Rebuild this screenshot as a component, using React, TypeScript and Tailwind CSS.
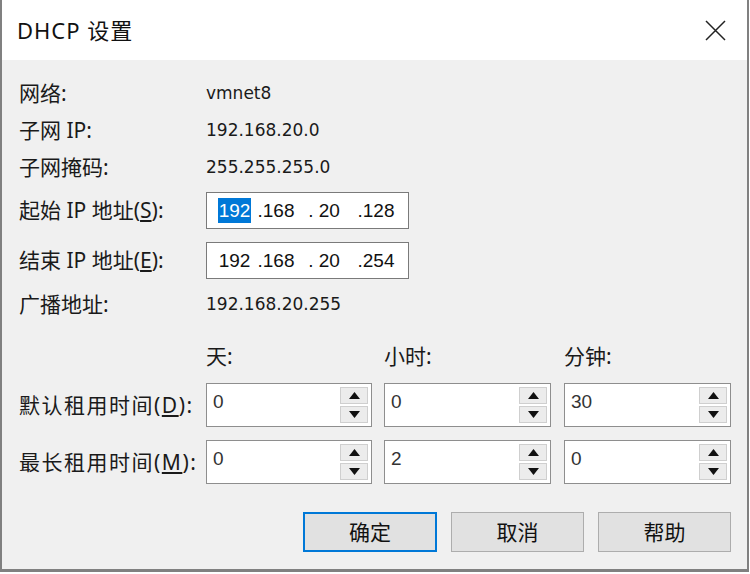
import React from "react";

const cjk = { fontFamily: '"Noto Sans", "Noto Sans CJK SC", sans-serif' };
const num = { fontFamily: '"DejaVu Sans", "Noto Sans CJK SC", sans-serif' };
const ipf = { fontFamily: '"Liberation Sans", "Noto Sans CJK SC", sans-serif' };

function Label({ children, className = "" }: { children: React.ReactNode; className?: string }) {
  return (
    <div className={"w-[187px] shrink-0 text-[21px] leading-none text-[#1a1a1a] " + className} style={cjk}>
      {children}
    </div>
  );
}

function InfoRow({ label, value }: { label: React.ReactNode; value: string }) {
  return (
    <div className="flex h-[37px] items-center">
      <Label>{label}</Label>
      <div className="text-[17px] leading-none text-[#1a1a1a]" style={num}>
        {value}
      </div>
    </div>
  );
}

function IpBox({ parts, selectFirst }: { parts: string[]; selectFirst?: boolean }) {
  return (
    <div
      className="flex h-[37px] w-[203px] items-center border border-[#7a7a7a] bg-white pl-[11px] text-[19px] leading-none text-[#111]"
      style={ipf}
    >
      <span className={"w-[33px] py-[3px] text-center " + (selectFirst ? "bg-[#0078d7] text-white" : "")}>{parts[0]}</span>
      <span className="w-[50px] text-center">.{parts[1]}</span>
      <span className="w-[46px] text-center">. {parts[2]}</span>
      <span className="w-[58px] text-center">.{parts[3]}</span>
    </div>
  );
}

function Tri({ up }: { up?: boolean }) {
  return (
    <svg width="11" height="7" viewBox="0 0 11 7">
      {up ? <polygon points="0,7 11,7 5.5,0" fill="#111" /> : <polygon points="0,0 11,0 5.5,7" fill="#111" />}
    </svg>
  );
}

function Spinner({ value, w }: { value: string; w: string }) {
  return (
    <div className={"flex h-[44px] border border-[#8e8e8e] bg-white " + w}>
      <div className="flex-1 pl-[6px] pt-[8px] text-[19px] leading-none text-[#333]" style={ipf}>
        {value}
      </div>
      <div className="flex w-[31px] flex-col gap-[2px] py-[3px] pr-[3px]">
        <div className="flex flex-1 items-center justify-center border border-[#cfcfcf] bg-[#ececec]">
          <Tri up />
        </div>
        <div className="flex flex-1 items-center justify-center border border-[#cfcfcf] bg-[#ececec]">
          <Tri />
        </div>
      </div>
    </div>
  );
}

function Btn({ children, def, w }: { children: React.ReactNode; def?: boolean; w: string }) {
  return (
    <div
      className={
        "flex h-[40px] items-center justify-center bg-[#e1e1e1] text-[21px] leading-none text-[#111] " +
        w +
        (def ? " border-2 border-[#0078d7]" : " border border-[#adadad]")
      }
      style={cjk}
    >
      {children}
    </div>
  );
}

export default function App() {
  return (
    <div className="h-[574px] w-[750px] bg-white">
      <div className="flex h-[572px] w-[749px] flex-col border-x-2 border-b-[3px] border-[#808080]">
        <div className="flex h-[60px] shrink-0 items-center justify-between bg-white pl-[15px] pr-[21px]">
          <div className="text-[22px] leading-none tracking-[1px] text-[#111]" style={cjk}>
            DHCP 设置
          </div>
          <svg width="21" height="21" viewBox="0 0 21 21">
            <path d="M1 1 L20 20 M20 1 L1 20" stroke="#222" strokeWidth="1.5" />
          </svg>
        </div>
        <div className="flex flex-1 flex-col bg-[#f0f0f0] pl-[17px] pr-[16px] pt-[15px]">
          <InfoRow label="网络:" value="vmnet8" />
          <InfoRow label="子网 IP:" value="192.168.20.0" />
          <InfoRow label="子网掩码:" value="255.255.255.0" />
          <div className="mt-[6px] flex h-[37px] items-center">
            <Label>
              起始 IP 地址(<span className="underline">S</span>):
            </Label>
            <IpBox parts={["192", "168", "20", "128"]} selectFirst />
          </div>
          <div className="mt-[13px] flex h-[37px] items-center">
            <Label>
              结束 IP 地址(<span className="underline">E</span>):
            </Label>
            <IpBox parts={["192", "168", "20", "254"]} />
          </div>
          <div className="mt-[7px]">
            <InfoRow label="广播地址:" value="192.168.20.255" />
          </div>
          <div className="mt-[21px] flex h-[24px] items-center text-[21px] leading-none text-[#1a1a1a]" style={cjk}>
            <div className="w-[187px] shrink-0" />
            <div className="w-[178px]">天:</div>
            <div className="w-[180px]">小时:</div>
            <div>分钟:</div>
          </div>
          <div className="mt-[15px] flex items-center">
            <Label className="tracking-[1.5px]">
              默认租用时间(<span className="underline">D</span>):
            </Label>
            <Spinner value="0" w="w-[166px]" />
            <div className="w-[12px]" />
            <Spinner value="0" w="w-[167px]" />
            <div className="w-[13px]" />
            <Spinner value="30" w="w-[167px]" />
          </div>
          <div className="mt-[13px] flex items-center">
            <Label className="tracking-[1.5px]">
              最长租用时间(<span className="underline">M</span>):
            </Label>
            <Spinner value="0" w="w-[166px]" />
            <div className="w-[12px]" />
            <Spinner value="2" w="w-[167px]" />
            <div className="w-[13px]" />
            <Spinner value="0" w="w-[167px]" />
          </div>
          <div className="mt-[28px] flex justify-end gap-[14px]">
            <Btn def w="w-[134px]">
              确定
            </Btn>
            <Btn w="w-[133px]">取消</Btn>
            <Btn w="w-[133px]">帮助</Btn>
          </div>
        </div>
      </div>
    </div>
  );
}
